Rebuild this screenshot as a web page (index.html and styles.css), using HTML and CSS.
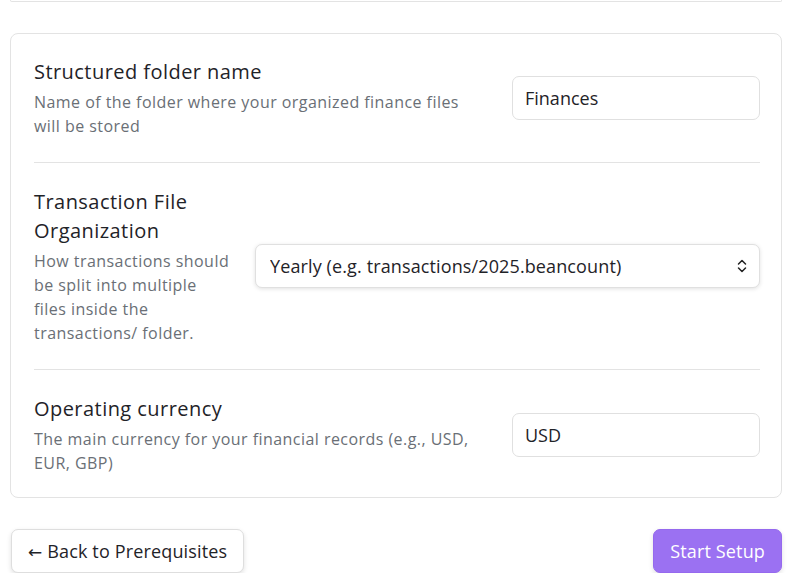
FILE: index.html
```html
<!DOCTYPE html>
<html lang="en">
<head>
<meta charset="utf-8">
<title>Setup – Configuration</title>
<link rel="stylesheet" href="styles.css">
</head>
<body>
<main class="page">
  <div class="card card-tail"></div>

  <section class="card settings">
    <div class="setting">
      <div class="setting-info">
        <h3 class="setting-title">Structured folder name</h3>
        <p class="setting-desc">Name of the folder where your organized finance files will be stored</p>
      </div>
      <input class="field" type="text" value="Finances">
    </div>

    <div class="setting">
      <div class="setting-info">
        <h3 class="setting-title">Transaction File Organization</h3>
        <p class="setting-desc">How transactions should be split into multiple files inside the transactions/ folder.</p>
      </div>
      <div class="select-wrap">
        <select class="field field-select">
          <option>Yearly (e.g. transactions/2025.beancount)</option>
        </select>
        <svg class="select-icon" viewBox="0 0 10 16" width="10" height="16" aria-hidden="true">
          <path d="M1.5 6 L5 2.5 L8.5 6 M1.5 10 L5 13.5 L8.5 10" fill="none" stroke="#222" stroke-width="1.5" stroke-linecap="round" stroke-linejoin="round"/>
        </svg>
      </div>
    </div>

    <div class="setting">
      <div class="setting-info">
        <h3 class="setting-title">Operating currency</h3>
        <p class="setting-desc">The main currency for your financial records (e.g., USD, EUR, GBP)</p>
      </div>
      <input class="field" type="text" value="USD">
    </div>
  </section>

  <div class="actions">
    <button class="btn btn-secondary" type="button"><span class="btn-arrow">←</span> Back to Prerequisites</button>
    <button class="btn btn-primary" type="button">Start Setup</button>
  </div>
</main>
</body>
</html>
```

FILE: styles.css
```css
* {
  box-sizing: border-box;
}

body {
  margin: 0;
  background: #ffffff;
  font-family: "Open Sans", "Noto Sans", sans-serif;
  color: #1f2328;
}

.page {
  padding: 0 16px 0 10px;
}

.card {
  border: 1px solid #e3e3e3;
  border-radius: 8px;
  background: #fff;
}

/* bottom edge of the previous step's card */
.card-tail {
  height: 2px;
  border-top: none;
  border-radius: 0 0 8px 8px;
  margin-bottom: 31px;
}

.settings {
  padding: 0 21px 0 23px;
}

.setting {
  display: flex;
  align-items: center;
  gap: 24px;
  padding: 24px 0;
  border-bottom: 1px solid #e3e3e3;
}

.setting:first-child {
  padding-top: 23px;
}

.setting:last-child {
  padding-bottom: 21px;
  border-bottom: none;
}

.setting-info {
  flex: 1;
  min-width: 0;
}

.setting-title {
  margin: 0;
  font-size: 20px;
  font-weight: 400;
  line-height: 29px;
  letter-spacing: 0.45px;
  color: #1f2328;
}

.setting-desc {
  margin: 5px 0 0;
  font-size: 16px;
  line-height: 23.7px;
  letter-spacing: 0.45px;
  color: #6a6f76;
}

.field {
  width: 248px;
  height: 44px;
  padding: 0 12px;
  border: 1px solid #e0e0e0;
  border-radius: 7px;
  background: #fff;
  font: inherit;
  font-size: 18px;
  color: #1f2328;
  outline: none;
}

.select-wrap {
  position: relative;
}

.field-select {
  display: block;
  width: 505px;
  height: 44px;
  padding: 0 40px 0 14px;
  letter-spacing: 0.12px;
  appearance: none;
  -webkit-appearance: none;
  box-shadow: 0 1px 4px rgba(0, 0, 0, 0.12);
}

.select-icon {
  position: absolute;
  right: 13px;
  top: 14px;
  pointer-events: none;
}

.actions {
  display: flex;
  justify-content: space-between;
  margin-top: 31px;
}

.btn {
  height: 44px;
  padding: 0 16px;
  border-radius: 7px;
  font: inherit;
  font-size: 18px;
  letter-spacing: 0.15px;
  cursor: pointer;
}

.btn-arrow {
  font-family: "DejaVu Sans", sans-serif;
  font-size: 17px;
}

.btn-secondary {
  margin-left: 1px;
  background: #fff;
  color: #1f2328;
  border: 1px solid #dedede;
  box-shadow: 0 2px 5px rgba(0, 0, 0, 0.12);
}

.btn-primary {
  background: #9b71f2;
  color: #fff;
  border: 1px solid #9569ee;
  box-shadow: 0 2px 5px rgba(0, 0, 0, 0.12);
}
```
